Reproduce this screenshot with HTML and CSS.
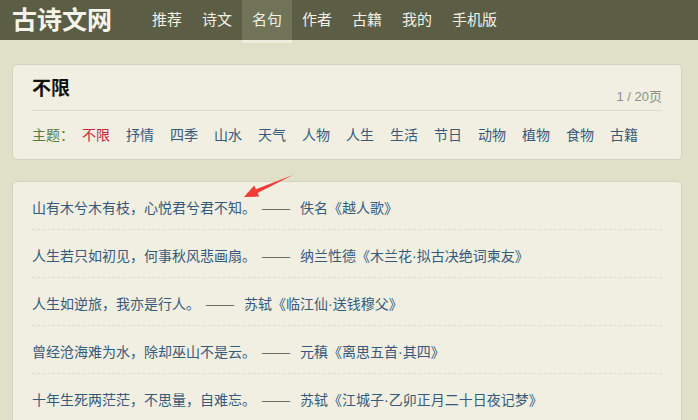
FILE: index.html
```html
<!DOCTYPE html>
<html lang="zh-CN">
<head>
<meta charset="utf-8">
<title>古诗文网</title>
<link rel="stylesheet" href="styles.css">
</head>
<body>
<header class="nav">
  <div class="logo">古诗文网</div>
  <nav class="menu">
    <a class="item">推荐</a>
    <a class="item">诗文</a>
    <a class="item active">名句</a>
    <a class="item">作者</a>
    <a class="item">古籍</a>
    <a class="item">我的</a>
    <a class="item">手机版</a>
  </nav>
</header>
<main class="main">
  <section class="card filter">
    <div class="head">
      <h1 class="title">不限</h1>
      <span class="pages">1 / 20页</span>
    </div>
    <div class="tags">
      <span class="label">主题：</span>
      <a class="tag on">不限</a>
      <a class="tag">抒情</a>
      <a class="tag">四季</a>
      <a class="tag">山水</a>
      <a class="tag">天气</a>
      <a class="tag">人物</a>
      <a class="tag">人生</a>
      <a class="tag">生活</a>
      <a class="tag">节日</a>
      <a class="tag">动物</a>
      <a class="tag">植物</a>
      <a class="tag">食物</a>
      <a class="tag">古籍</a>
    </div>
  </section>
  <section class="card list">
    <div class="row"><a>山有木兮木有枝，心悦君兮君不知。</a><span class="dash">——</span><a>佚名《越人歌》</a></div>
    <div class="row"><a>人生若只如初见，何事秋风悲画扇。</a><span class="dash">——</span><a>纳兰性德《木兰花·拟古决绝词柬友》</a></div>
    <div class="row"><a>人生如逆旅，我亦是行人。</a><span class="dash">——</span><a>苏轼《临江仙·送钱穆父》</a></div>
    <div class="row"><a>曾经沧海难为水，除却巫山不是云。</a><span class="dash">——</span><a>元稹《离思五首·其四》</a></div>
    <div class="row"><a>十年生死两茫茫，不思量，自难忘。</a><span class="dash">——</span><a>苏轼《江城子·乙卯正月二十日夜记梦》</a></div>
    <svg class="arrow" width="52" height="26" viewBox="0 0 52 26">
      <path d="M50 1 L14.5 18.9 L16.2 22.6 L1 23 L11.2 11.6 L12.9 15.3 Z" fill="#f23a36"/>
    </svg>
  </section>
</main>
</body>
</html>
```

FILE: styles.css
```css
html, body {
  margin: 0;
  padding: 0;
}
body {
  background: #e0dfc7;
  font-family: "Liberation Sans", "Noto Sans CJK SC", sans-serif;
  font-size: 14px;
  overflow: hidden;
}
a { text-decoration: none; }

.nav {
  height: 40px;
  background: #5b5d45;
  display: flex;
  align-items: stretch;
}
.logo {
  padding-left: 12px;
  width: 128px;
  color: #f5f4ea;
  font-size: 25px;
  font-weight: bold;
  line-height: 40px;
}
.menu {
  display: flex;
  padding-left: 2px;
}
.item {
  display: block;
  padding: 0 10px;
  line-height: 40px;
  font-size: 15px;
  color: #f2f1e4;
}
.item.active {
  background: #717359;
  box-shadow: 0 3px 0 #eeede0;
}

.main {
  padding: 24px 16px 0 12px;
}
.card {
  background: #f0efe2;
  border: 1px solid #d4d3c0;
  border-radius: 5px;
  box-sizing: border-box;
}
.filter {
  height: 96px;
  padding: 0 19px;
}
.head {
  height: 45px;
  display: flex;
  align-items: flex-end;
  justify-content: space-between;
  border-bottom: 1px solid #dcdbcb;
}
.title {
  margin: 0;
  font-size: 19px;
  font-weight: bold;
  color: #111;
  line-height: 26px;
  padding-bottom: 8px;
}
.pages {
  font-size: 13px;
  color: #8f8f8a;
  padding-bottom: 5px;
}
.tags {
  display: flex;
  padding-top: 13px;
  line-height: 22px;
}
.label {
  color: #5a7a3a;
  width: 50px;
}
.tag {
  color: #375a7b;
  margin-right: 16px;
}
.tag.on { color: #c8283c; }

.list {
  position: relative;
  margin-top: 21px;
  padding: 0 19px;
  height: 260px;
}
.row {
  height: 48px;
  line-height: 22px;
  padding-top: 15px;
  box-sizing: border-box;
  border-bottom: 1px dashed #dddccc;
  color: #375a7b;
  display: flex;
}
.row a { color: #375a7b; }
.dash {
  margin: 0 10px 0 6px;
  color: #6a6a60;
}
.arrow {
  position: absolute;
  left: 230px;
  top: -8px;
}
```
